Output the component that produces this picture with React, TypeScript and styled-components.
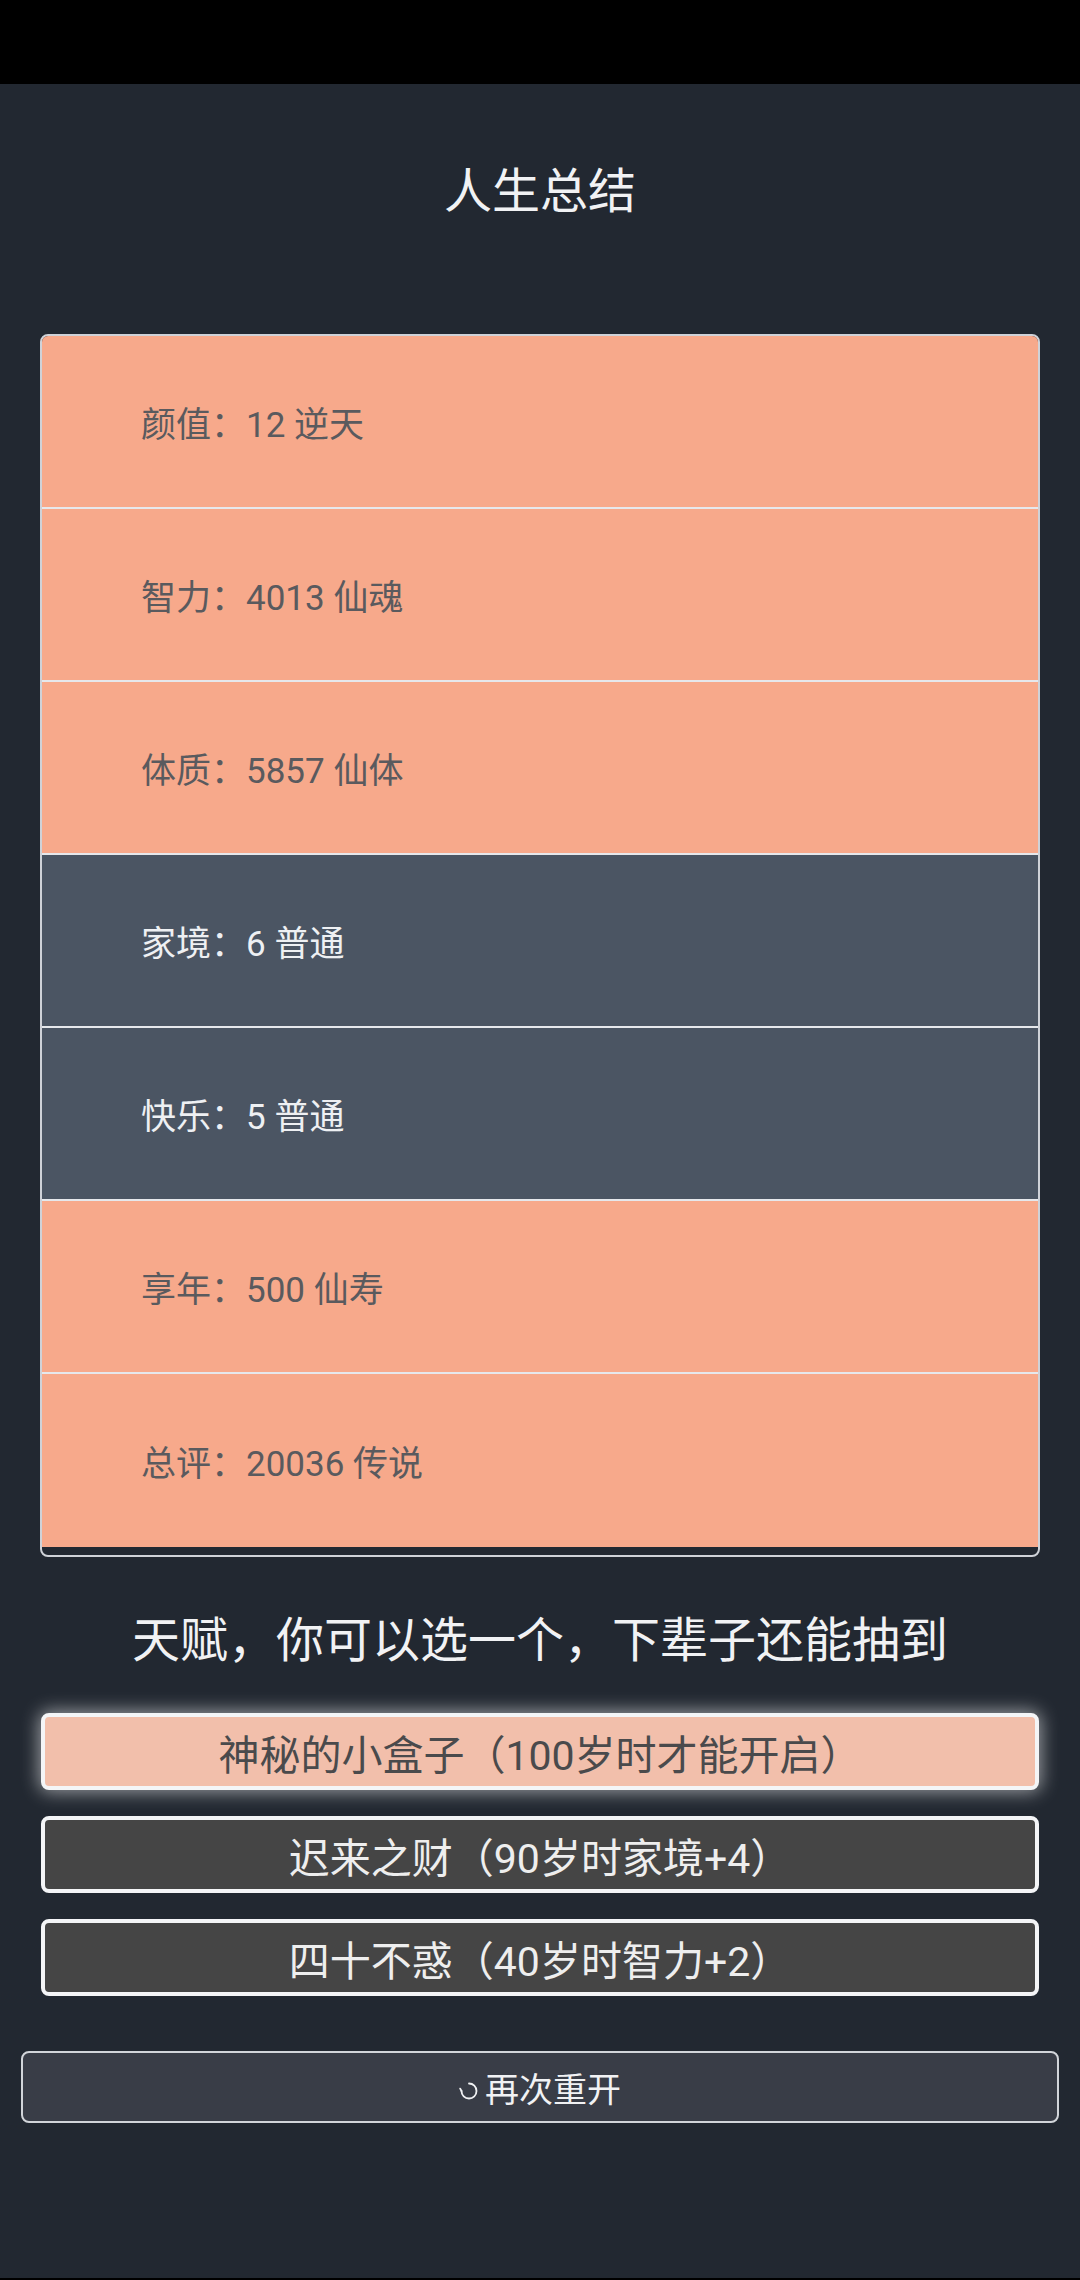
import styled, { createGlobalStyle } from 'styled-components';

const GlobalStyle = createGlobalStyle`
  html, body {
    margin: 0;
    padding: 0;
    background-color: #222831;
  }

  * {
    box-sizing: border-box;
  }
`;

const Screen = styled.div`
  width: 1080px;
  min-height: 2280px;
  display: flex;
  flex-direction: column;
  background-color: #222831;
  font-family: Roboto, 'Noto Sans CJK SC', sans-serif;
`;

const StatusBar = styled.div`
  height: 84px;
  background-color: #000;
`;

const Content = styled.main`
  flex: 1;
  display: flex;
  flex-direction: column;
  padding: 72px 0 0;
`;

const Title = styled.h1`
  margin: 0;
  height: 72px;
  line-height: 72px;
  font-size: 48px;
  font-weight: 400;
  color: #f1f2f4;
  text-align: center;
`;

const SummaryCard = styled.section`
  margin: 106px 40px 0;
  border: 2px solid #cfd2d8;
  border-radius: 8px;
  padding-bottom: 8px;
  overflow: hidden;
`;

const SummaryRow = styled.div<{ $grade: 'high' | 'normal' }>`
  height: 173px;
  display: flex;
  align-items: center;
  padding-left: 99px;
  font-size: 35px;
  color: ${(p) => (p.$grade === 'high' ? '#5a5a5e' : '#eef0f3')};
  background-color: ${(p) => (p.$grade === 'high' ? '#f7a98b' : '#4b5563')};
  border-bottom: 2px solid #e6e8ec;

  &:last-child {
    border-bottom: none;
  }
`;

const Subtitle = styled.h2`
  margin: 48px 0 0;
  height: 72px;
  line-height: 72px;
  font-size: 48px;
  font-weight: 400;
  color: #f1f2f4;
  text-align: center;
`;

const TalentList = styled.div`
  display: flex;
  flex-direction: column;
  gap: 26px;
  margin: 36px 41px 0;
`;

const TalentButton = styled.button<{ $selected?: boolean }>`
  height: 77px;
  border: 4px solid #f4f5f7;
  border-radius: 8px;
  font-family: inherit;
  font-size: 41px;
  color: ${(p) => (p.$selected ? '#4a4a4c' : '#eeeeee')};
  background-color: ${(p) => (p.$selected ? '#f2bfab' : '#454545')};
  box-shadow: ${(p) => (p.$selected ? '0 0 18px 2px rgba(255, 255, 255, 0.55)' : 'none')};
  cursor: pointer;
`;

const RestartButton = styled.button`
  margin: 55px 21px 0;
  height: 72px;
  display: flex;
  align-items: center;
  justify-content: center;
  border: 2px solid #d2d5da;
  border-radius: 8px;
  background-color: #393d47;
  font-family: inherit;
  font-size: 34px;
  color: #f1f2f4;
  cursor: pointer;

  svg {
    width: 20px;
    height: 20px;
    margin-top: 8px;
    margin-right: 6px;
  }
`;

const BottomBar = styled.div`
  height: 2px;
  background-color: #000;
`;

const RestartIcon = () => (
  <svg viewBox="0 0 20 20" fill="none" stroke="#f1f2f4" strokeWidth="1.8" strokeLinecap="round">
    <path d="M10 2.5 A7.5 7.5 0 1 1 2.5 10" />
    <path d="M2.5 10 L1.2 7.6" />
  </svg>
);

const stats: { label: string; value: string; grade: 'high' | 'normal' }[] = [
  { label: '颜值', value: '12 逆天', grade: 'high' },
  { label: '智力', value: '4013 仙魂', grade: 'high' },
  { label: '体质', value: '5857 仙体', grade: 'high' },
  { label: '家境', value: '6 普通', grade: 'normal' },
  { label: '快乐', value: '5 普通', grade: 'normal' },
  { label: '享年', value: '500 仙寿', grade: 'high' },
  { label: '总评', value: '20036 传说', grade: 'high' },
];

const talents = [
  { name: '神秘的小盒子（100岁时才能开启）', selected: true },
  { name: '迟来之财（90岁时家境+4）', selected: false },
  { name: '四十不惑（40岁时智力+2）', selected: false },
];

export default function App() {
  return (
    <>
      <GlobalStyle />
      <Screen>
        <StatusBar />
        <Content>
          <Title>人生总结</Title>
          <SummaryCard>
            {stats.map((s) => (
              <SummaryRow key={s.label} $grade={s.grade}>
                {s.label}：{s.value}
              </SummaryRow>
            ))}
          </SummaryCard>
          <Subtitle>天赋，你可以选一个，下辈子还能抽到</Subtitle>
          <TalentList>
            {talents.map((t) => (
              <TalentButton key={t.name} $selected={t.selected}>
                {t.name}
              </TalentButton>
            ))}
          </TalentList>
          <RestartButton>
            <RestartIcon />
            再次重开
          </RestartButton>
        </Content>
        <BottomBar />
      </Screen>
    </>
  );
}
